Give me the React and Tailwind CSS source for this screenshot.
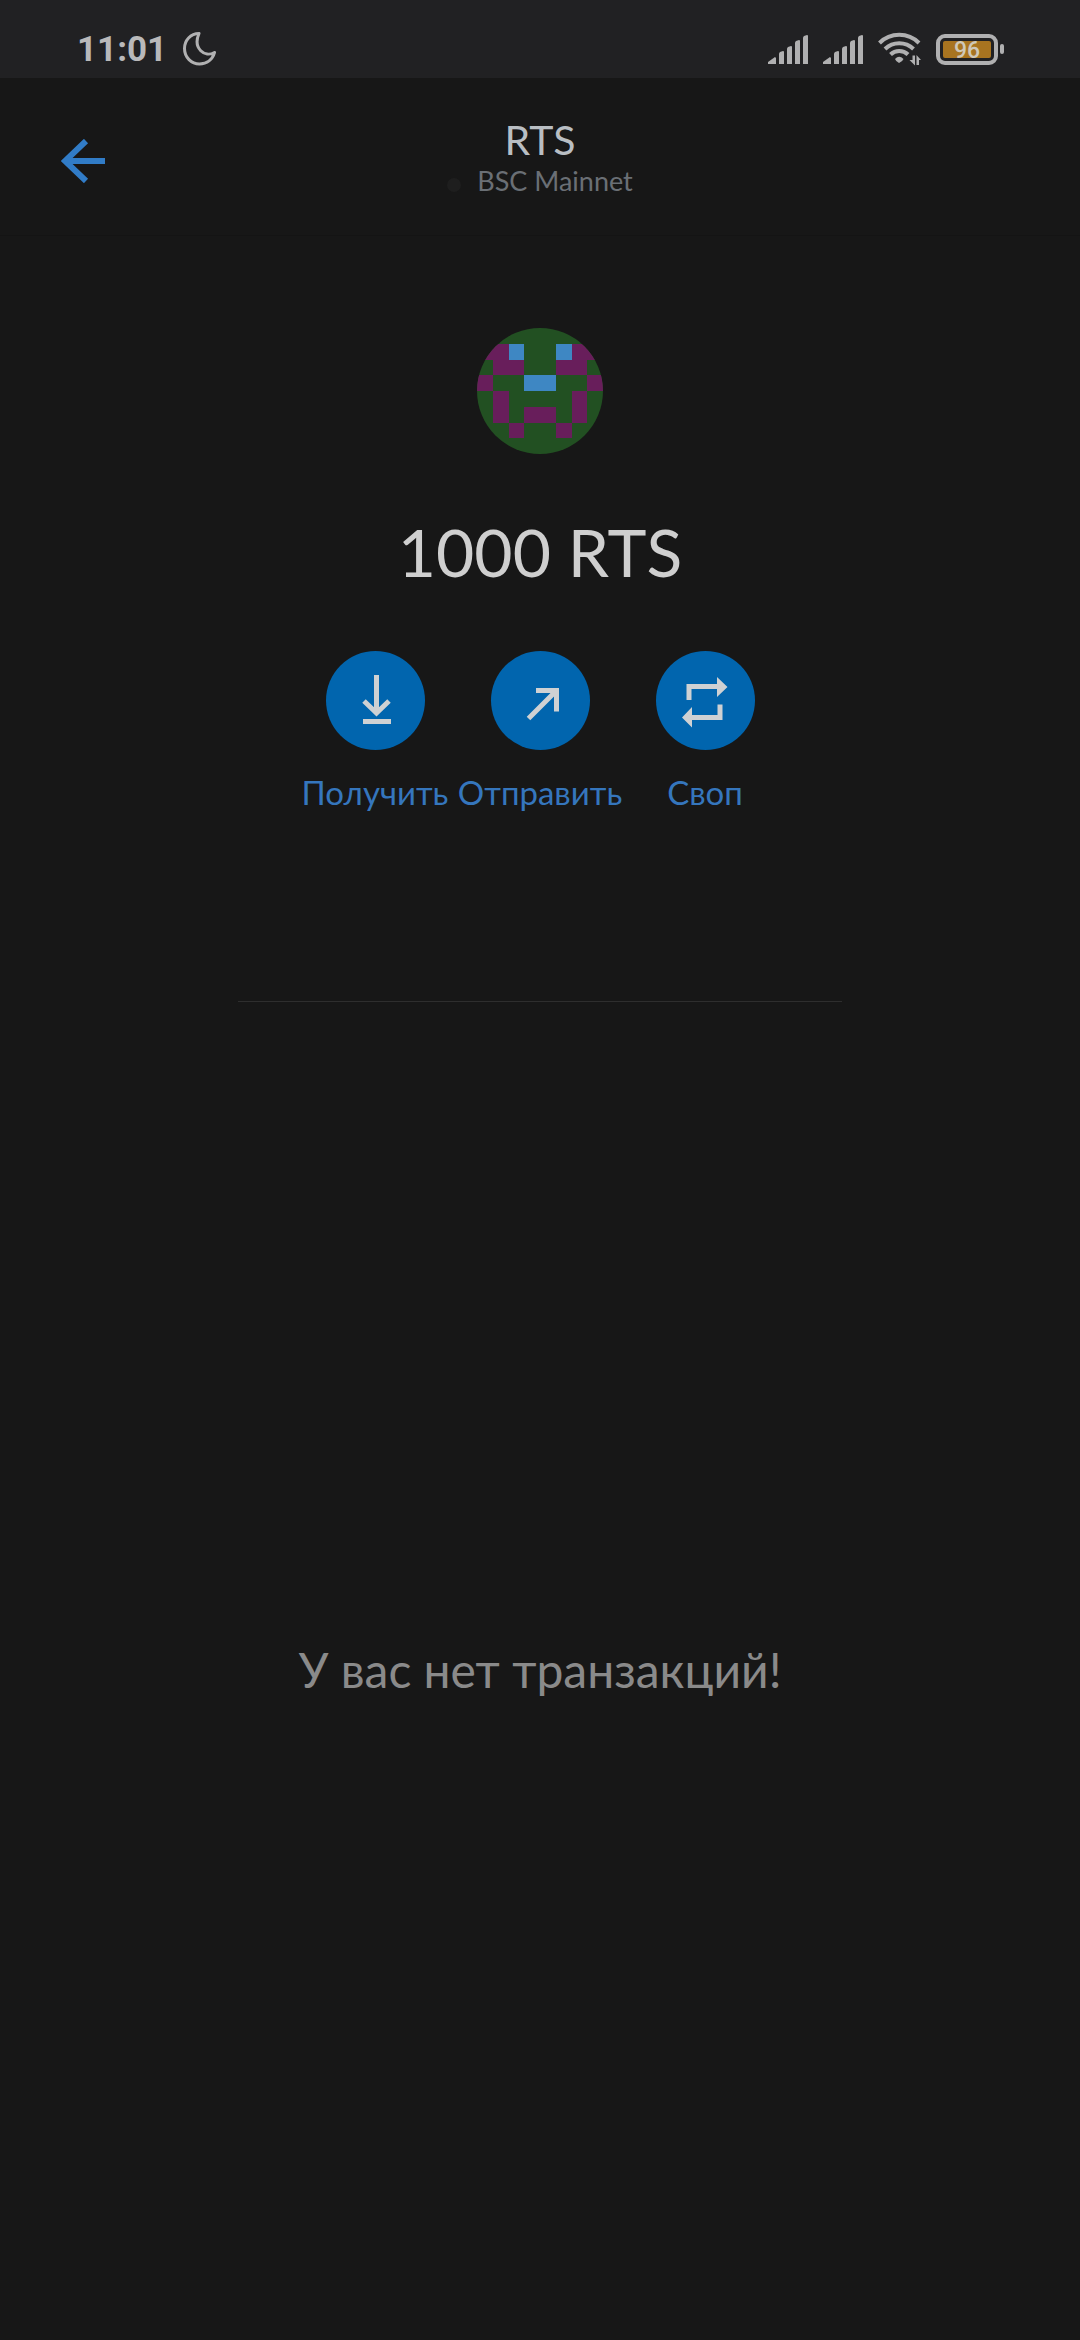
const AVATAR_CELLS = [
  ["#681e5b", [[0, 1], [1, 1], [6, 1], [7, 1], [1, 2], [2, 2], [5, 2], [6, 2], [0, 3], [7, 3], [1, 4], [6, 4], [1, 5], [3, 5], [4, 5], [6, 5], [2, 6], [5, 6]]],
  ["#3e87c3", [[2, 1], [5, 1], [3, 3], [4, 3]]],
];

function SignalIcon() {
  return (
    <svg viewBox="0 0 40 29" className="h-[29px] w-10 fill-[#b0b0b1]" aria-hidden="true">
      <path d="M0 29V27L7 22L8 23V29Z" />
      <path d="M11 29V19Q11 18 12 17L15 16Q16 16 16 17V29Z" />
      <path d="M19 29V14Q19 13 20 12L23 11Q24 11 24 12V29Z" />
      <path d="M27 29V8Q27 7 28 6L31 5Q32 5 32 6V29Z" />
      <path d="M35 29V3Q35 2 36 1L39 0Q40 0 40 1V29Z" />
    </svg>
  );
}

function WifiIcon() {
  return (
    <svg viewBox="0 0 43 34" className="h-[34px] w-[43px]" fill="none" stroke="#b0b0b1" strokeWidth="4" aria-hidden="true">
      <path d="M1.5 11A28 28 0 0 1 41 11" />
      <path d="M7 17A20.5 20.5 0 0 1 35.5 17" />
      <path d="M12.5 22.5A12.5 12.5 0 0 1 30 22.5" />
      <path d="M17 27Q21 22.5 25.5 27Q25 29 21 31Q17.5 29 17 27Z" fill="#b0b0b1" stroke="none" />
      <path d="M37 23.5V33.5L31.5 28H34.5V23.5ZM38.5 33V23L43 28H41V33Z" fill="#b0b0b1" stroke="none" />
    </svg>
  );
}

function Battery({ level }) {
  return (
    <div className="flex items-center gap-[2px]">
      <div className="flex h-[31px] w-[62px] rounded-[9px] border-4 border-[#b0b0b1] p-[3px]">
        <div className="flex flex-1 items-center justify-center rounded-xs bg-[#a87420] pt-[2px] font-['Roboto',sans-serif] text-[23px] leading-none font-medium text-[#cfc8b8]">
          {level}
        </div>
      </div>
      <div className="h-[10px] w-1 rounded-sm bg-[#b0b0b1]" />
    </div>
  );
}

function StatusBar() {
  return (
    <div className="flex h-[78px] items-center justify-between bg-[#212123] pt-5 pr-[76px] pl-[77px]">
      <div className="flex items-center gap-4">
        <span className="pt-[2px] font-['Roboto',sans-serif] text-[35px] leading-10 font-bold text-[#b9b9ba]">11:01</span>
        <svg viewBox="0 0 33 34" className="h-[34px] w-[33px]" fill="none" stroke="#b0b0b1" strokeWidth="3" strokeLinejoin="round" aria-hidden="true">
          <path d="M16 1.5C7.5 1.5 1.5 8.5 1.5 16.5C1.5 25.5 8.5 32 16.5 32C24 32 29.5 27.5 31.5 20.5C22 26 9.5 16.5 16 1.5Z" />
        </svg>
      </div>
      <div className="flex items-center gap-[15px]">
        <SignalIcon />
        <SignalIcon />
        <WifiIcon />
        <Battery level={96} />
      </div>
    </div>
  );
}

function Header() {
  return (
    <header className="grid h-[158px] grid-cols-[1fr_auto_1fr] items-center border-b border-[#141414] px-[61px]">
      <button type="button" aria-label="Назад" className="justify-self-start pt-2">
        <svg viewBox="0 0 44 44" className="size-11" fill="none" stroke="#317cc7" strokeWidth="6" aria-hidden="true">
          <path d="M25 2L4 22L25 42M4 22H44" />
        </svg>
      </button>
      <div className="flex flex-col items-center pt-[2px]">
        <h1 className="text-[41px] leading-[46px] text-[#b9bec3]">RTS</h1>
        <div className="flex items-center gap-4 text-[27px] leading-9 text-[#6a6f75]">
          <span className="mt-2 size-[14px] rounded-full bg-[#1e1e1e]" />
          BSC Mainnet
        </div>
      </div>
    </header>
  );
}

function Avatar() {
  return (
    <svg viewBox="0 0 8 8" className="size-[126px] rounded-full bg-[#225022]" shapeRendering="crispEdges" aria-hidden="true">
      {AVATAR_CELLS.map(([color, cells]) =>
        cells.map(([x, y]) => <rect key={`${x}-${y}`} x={x} y={y} width="1" height="1" fill={color} />)
      )}
    </svg>
  );
}

function ActionButton({ label, children }) {
  return (
    <button type="button" className="flex w-[165px] flex-col items-center gap-5 whitespace-nowrap text-[#3576bd]">
      <span className="flex size-[99px] items-center justify-center rounded-full bg-[#0165ae]">
        <svg viewBox="0 0 99 99" className="size-full" fill="none" stroke="#cfd1d3" strokeWidth="5" aria-hidden="true">
          {children}
        </svg>
      </span>
      <span className="text-[33px] leading-11">{label}</span>
    </button>
  );
}

export default function App() {
  return (
    <div className="flex min-h-screen flex-col bg-[#171717] font-['Lato','Inter',sans-serif]">
      <StatusBar />
      <Header />

      <main className="flex flex-1 flex-col items-center">
        <section className="flex w-full flex-col items-center pt-[92px]">
          <Avatar />
          <p className="pt-[58px] text-[66px] leading-20 text-[#cfcfcf]">1000 RTS</p>
          <div className="flex pt-[59px]">
            <ActionButton label="Получить">
              <path d="M50.5 24V62M38 50L50.5 62L63 50M37 70.5H65" />
            </ActionButton>
            <ActionButton label="Отправить">
              <path d="M45 39.5H65.5V60.5M65.5 39.5L37.5 67.5" />
            </ActionButton>
            <ActionButton label="Своп">
              <path d="M33 49V35.5H62M64 53.5V66.5H35" />
              <path d="M61 26L71.5 36L61 46ZM36 56V76.5L26 66.5Z" fill="#cfd1d3" stroke="none" />
            </ActionButton>
          </div>
        </section>

        <hr className="mt-[187px] w-[56%] border-[#2e2e2e]" />

        <p className="mt-[638px] text-[48px] leading-[60px] text-[#8a8a8a]">У вас нет транзакций!</p>
      </main>
    </div>
  );
}
